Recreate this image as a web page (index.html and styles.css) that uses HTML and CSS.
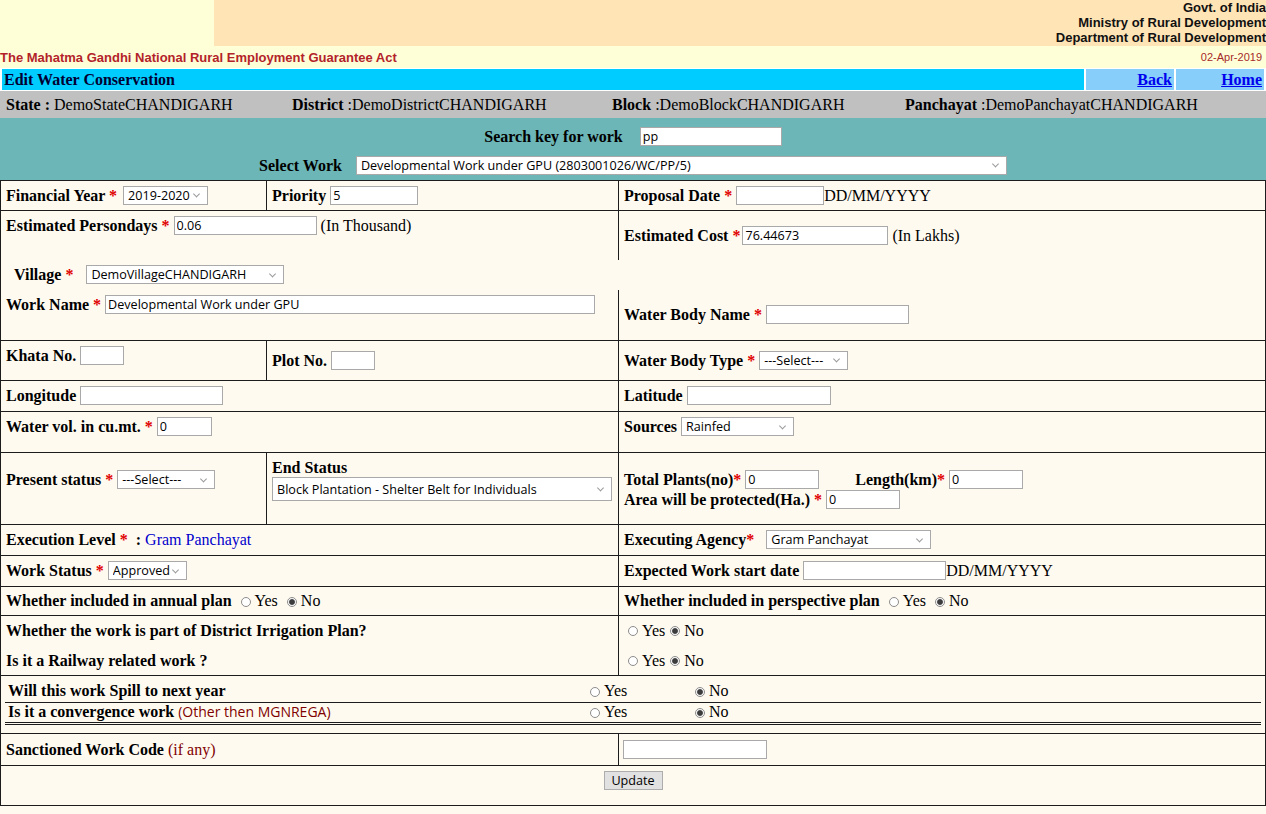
FILE: index.html
```html
<!DOCTYPE html>
<html lang="en">
<head>
<meta charset="utf-8">
<title>Edit Water Conservation</title>
<link rel="stylesheet" href="styles.css">
</head>
<body>
<div class="masthead">
  <div class="masthead-blank"></div>
  <div class="masthead-org">
    <div>Govt. of India</div>
    <div>Ministry of Rural Development</div>
    <div>Department of Rural Development</div>
  </div>
</div>
<div class="actbar">
  <span class="act">The Mahatma Gandhi National Rural Employment Guarantee Act</span>
  <span class="date">02-Apr-2019</span>
</div>
<div class="navbar">
  <div class="pagetitle">Edit Water Conservation</div>
  <div class="navlink"><a href="#">Back</a></div>
  <div class="navlink"><a href="#">Home</a></div>
</div>
<div class="locbar">
  <div><b>State : </b>DemoStateCHANDIGARH</div>
  <div><b>District</b> :DemoDistrictCHANDIGARH</div>
  <div><b>Block</b> :DemoBlockCHANDIGARH</div>
  <div><b>Panchayat</b> :DemoPanchayatCHANDIGARH</div>
</div>
<div class="searchbar">
  <div class="srow"><b class="slabel s1">Search key for work</b><input class="f w142" value="pp"></div>
  <div class="srow"><b class="slabel s2">Select Work</b><span class="dd"><select class="f w651"><option>Developmental Work under GPU (2803001026/WC/PP/5)</option></select></span></div>
</div>

<form class="wc-form">
  <div class="row h30">
    <div class="cell la mid"><div><b>Financial Year <span class="req">*</span></b> <span class="dd nudge"><select class="f w85"><option>2019-2020</option></select></span></div></div>
    <div class="cell lb mid"><div><b>Priority</b> <input class="f w88" value="5"></div></div>
    <div class="cell rt mid"><div><b>Proposal Date <span class="req">*</span></b> <input class="f w88">DD/MM/YYYY</div></div>
  </div>
  <div class="row h49 open">
    <div class="cell lf top"><b>Estimated Persondays <span class="req">*</span></b> <input class="f w143" value="0.06"> (In Thousand)</div>
    <div class="cell rt mid"><div><b>Estimated Cost <span class="req">*</span></b><input class="f w146 tight" value="76.44673"> (In Lakhs)</div></div>
  </div>
  <div class="row h30 open">
    <div class="cell village mid"><div><b>Village <span class="req">*</span></b> <span class="dd wide-gap"><select class="f w198"><option>DemoVillageCHANDIGARH</option></select></span></div></div>
  </div>
  <div class="row h51">
    <div class="cell lf top"><b>Work Name <span class="req">*</span></b> <input class="f w490" value="Developmental Work under GPU"></div>
    <div class="cell rt mid"><div><b>Water Body Name <span class="req">*</span></b> <input class="f w143"></div></div>
  </div>
  <div class="row h40">
    <div class="cell la top"><b>Khata No.</b> <input class="f w44"></div>
    <div class="cell lb mid"><div><b>Plot No.</b> <input class="f w44"></div></div>
    <div class="cell rt mid"><div><b>Water Body Type <span class="req">*</span></b> <span class="dd"><select class="f w89"><option>---Select---</option></select></span></div></div>
  </div>
  <div class="row h31">
    <div class="cell lf mid"><div><b>Longitude</b> <input class="f w143"></div></div>
    <div class="cell rt mid"><div><b>Latitude</b> <input class="f w144"></div></div>
  </div>
  <div class="row h41">
    <div class="cell lf top"><b>Water vol. in cu.mt. <span class="req">*</span></b> <input class="f w55" value="0"></div>
    <div class="cell rt top"><b>Sources</b> <span class="dd"><select class="f w113"><option>Rainfed</option></select></span></div>
  </div>
  <div class="row h72">
    <div class="cell la top deep"><b>Present status <span class="req">*</span></b> <span class="dd"><select class="f w98"><option>---Select---</option></select></span></div>
    <div class="cell lb top">
      <div class="endlabel"><b>End Status</b></div>
      <div><span class="dd"><select class="f w340 tall"><option>Block Plantation - Shelter Belt for Individuals</option></select></span></div>
    </div>
    <div class="cell rt top deep">
      <div><b>Total Plants(no)<span class="req">*</span></b> <input class="f w74" value="0"><b class="length">Length(km)<span class="req">*</span></b> <input class="f w74" value="0"></div>
      <div><b>Area will be protected(Ha.) <span class="req">*</span></b> <input class="f w74" value="0"></div>
    </div>
  </div>
  <div class="row h31">
    <div class="cell lf mid"><div><b>Execution Level <span class="req">*</span>&nbsp;&nbsp;:</b> <span class="level">Gram Panchayat</span></div></div>
    <div class="cell rt mid"><div><b>Executing Agency<span class="req">*</span></b>&nbsp;&nbsp; <span class="dd"><select class="f w165"><option>Gram Panchayat</option></select></span></div></div>
  </div>
  <div class="row h31">
    <div class="cell lf mid"><div><b>Work Status <span class="req">*</span></b> <span class="dd"><select class="f w79"><option>Approved</option></select></span></div></div>
    <div class="cell rt mid"><div><b>Expected Work start date</b> <input class="f w143">DD/MM/YYYY</div></div>
  </div>
  <div class="row h29">
    <div class="cell lf mid"><div><b>Whether included in annual plan</b> <input type="radio" name="annual"><span>Yes</span> <input type="radio" name="annual" checked><span>No</span></div></div>
    <div class="cell rt mid"><div><b>Whether included in perspective plan</b> <input type="radio" name="persp"><span>Yes</span> <input type="radio" name="persp" checked><span>No</span></div></div>
  </div>
  <div class="row h60">
    <div class="cell lf pair">
      <div class="pline"><b>Whether the work is part of District Irrigation Plan?</b></div>
      <div class="pline"><b>Is it a Railway related work ?</b></div>
    </div>
    <div class="cell rt pair radios">
      <div class="pline"><input type="radio" name="dip">Yes<input type="radio" name="dip" checked>No</div>
      <div class="pline"><input type="radio" name="rail">Yes<input type="radio" name="rail" checked>No</div>
    </div>
  </div>
  <div class="row h58 spillrow">
    <div class="spill">
      <div class="sp-row sp-first">
        <div class="sp-q"><b>Will this work Spill to next year</b></div>
        <div><input type="radio" name="spill">Yes</div>
        <div><input type="radio" name="spill" checked>No</div>
      </div>
      <div class="sp-row sp-last">
        <div class="sp-q"><b>Is it a convergence work</b> <span class="note">(Other then MGNREGA)</span></div>
        <div><input type="radio" name="conv">Yes</div>
        <div><input type="radio" name="conv" checked>No</div>
      </div>
    </div>
  </div>
  <div class="row h32">
    <div class="cell lf mid"><div><b>Sanctioned Work Code</b> <span class="ifany">(if any)</span></div></div>
    <div class="cell rt mid code"><div><input class="f w144"></div></div>
  </div>
  <div class="row h39 actions">
    <button type="button" class="update">Update</button>
  </div>
</form>
</body>
</html>
```

FILE: styles.css
```css
* {
  box-sizing: border-box;
}

html,
body {
  margin: 0;
  padding: 0;
}

body {
  background: #fffaf0;
  color: #000;
  font-family: "Liberation Serif", "Times New Roman", serif;
  font-size: 16px;
}

/* ---------- masthead ---------- */
.masthead {
  display: flex;
  height: 46px;
}

.masthead-blank {
  width: 214px;
  background: #ffffd7;
}

.masthead-org {
  flex: 1;
  background: #ffe4b5;
  text-align: right;
  font: bold 13px/15px "Liberation Sans", Arial, sans-serif;
  color: #111;
}

.actbar {
  display: flex;
  justify-content: space-between;
  align-items: center;
  height: 22px;
  background: #ffffd7;
  padding-right: 4px;
  font-family: "Liberation Sans", Arial, sans-serif;
}

.act {
  font-weight: bold;
  font-size: 13px;
  color: #b3232a;
}

.date {
  font-size: 11px;
  color: #a52a2a;
}

/* ---------- title / navigation ---------- */
.navbar {
  display: flex;
  gap: 2px;
  height: 23px;
  padding: 1px 2px 1px 2px;
  background: #ffffff;
}

.pagetitle {
  flex: 1;
  background: #00ccff;
  color: #000033;
  font-weight: bold;
  line-height: 22px;
  padding-left: 2px;
}

.navlink {
  width: 88px;
  background: #87cefa;
  text-align: right;
  line-height: 22px;
  padding-right: 2px;
}

.navlink a {
  color: #0000ee;
  font-weight: bold;
}

/* ---------- location strip ---------- */
.locbar {
  display: grid;
  grid-template-columns: 286px 320px 293px 1fr;
  align-items: center;
  height: 27px;
  padding: 1px 0 0 6px;
  background: #c0c0c0;
}

/* ---------- work search ---------- */
.searchbar {
  height: 62px;
  padding-top: 4px;
  background: #6cb6b7;
}

.srow {
  display: flex;
  justify-content: center;
  align-items: center;
  height: 28px;
  margin-bottom: 1px;
}

.slabel {
  padding-top: 1px;
}

.slabel.s1 {
  margin-right: 17px;
}

.slabel.s2 {
  margin-right: 14px;
}

/* ---------- form controls ---------- */
.f {
  font-family: "Open Sans", "Noto Sans", sans-serif;
  font-size: 12.6px;
  color: #000;
  height: 19px;
  border: 1px solid #a9a9a9;
  background: #fff;
  vertical-align: top;
  margin: 0;
  border-radius: 0;
}

input.f {
  padding: 0 2px;
}

input.f.tight {
  margin-left: 2px;
}

select.f {
  -webkit-appearance: none;
  appearance: none;
  padding: 0 16px 0 4px;
  display: block;
}

select.f.tall {
  height: 24px;
}

.dd {
  position: relative;
  display: inline-block;
  vertical-align: top;
}

.dd.nudge {
  margin-left: 2px;
}

.dd.wide-gap {
  margin-left: 9px;
}

.dd::after {
  content: "";
  position: absolute;
  right: 9px;
  top: 50%;
  width: 4px;
  height: 4px;
  border-right: 1px solid #9a9a9a;
  border-bottom: 1px solid #9a9a9a;
  transform: translateY(-70%) rotate(45deg);
  pointer-events: none;
}

.w44 { width: 44px; }
.w55 { width: 55px; }
.w74 { width: 74px; }
.w79 { width: 79px; }
.w85 { width: 85px; }
.w88 { width: 88px; }
.w89 { width: 89px; }
.w98 { width: 98px; }
.w113 { width: 113px; }
.w142 { width: 142px; }
.w143 { width: 143px; }
.w144 { width: 144px; }
.w146 { width: 146px; }
.w165 { width: 165px; }
.w198 { width: 198px; }
.w340 { width: 340px; }
.w490 { width: 490px; }
.w651 { width: 651px; }

input[type="radio"] {
  -webkit-appearance: none;
  appearance: none;
  width: 10px;
  height: 10px;
  margin: 0 4px 0 5px;
  border: 1px solid #8c8c8c;
  border-radius: 50%;
  background: #fff;
  vertical-align: -1px;
}

input[type="radio"]:checked {
  background: radial-gradient(circle, #3c3c3c 0 2.4px, #9a9a9a 2.9px, #fff 3.6px);
}

.req {
  color: #e00000;
}

/* ---------- main form grid ---------- */
.wc-form {
  margin: 0;
  border: 1px solid #1c1c1c;
  background: #fffaf0;
}

.row {
  display: flex;
  border-bottom: 1px solid #1c1c1c;
  line-height: 20px;
}

.row.open {
  border-bottom: none;
}

.row:last-child {
  border-bottom: none;
}

.h29 { height: 29px; }
.h30 { height: 30px; }
.h31 { height: 31px; }
.h32 { height: 32px; }
.h39 { height: 39px; }
.h40 { height: 40px; }
.h41 { height: 41px; }
.h49 { height: 49px; }
.h51 { height: 51px; }
.h58 { height: 58px; }
.h60 { height: 60px; }
.h72 { height: 72px; }

.cell {
  padding-left: 5px;
}

.la {
  width: 266px;
  border-right: 1px solid #1c1c1c;
}

.lb {
  width: 352px;
  border-right: 1px solid #1c1c1c;
}

.lf {
  width: 618px;
  border-right: 1px solid #1c1c1c;
}

.rt {
  flex: 1;
}

.village {
  width: 618px;
  padding-left: 13px;
}

.mid {
  display: flex;
  align-items: center;
}

.top {
  padding-top: 5px;
}

.top.deep {
  padding-top: 17px;
}

.endlabel {
  line-height: 19px;
}

.length {
  margin-left: 36px;
}

.level {
  color: #0000cc;
}

.pair .pline {
  height: 30px;
  display: flex;
  align-items: center;
}

.pair .pline:last-child {
  height: 29px;
}

.radios {
  padding-left: 4px;
}

/* spill / convergence block */
.spillrow {
  display: block;
  padding: 0 4px;
}

.spill {
  line-height: 18px;
}

.sp-row {
  display: grid;
  grid-template-columns: 580px 105px 1fr;
  align-items: center;
  border-bottom: 1px solid #1c1c1c;
}

.sp-row.sp-first {
  height: 27px;
  padding-top: 3px;
}

.sp-row.sp-last {
  height: 22px;
  padding-bottom: 2px;
  border-bottom: 3px double #1c1c1c;
}

.sp-q {
  padding-left: 3px;
}

.note {
  font-family: "Open Sans", "Noto Sans", sans-serif;
  font-size: 14px;
  color: #800000;
}

.ifany {
  color: #800000;
}

.code {
  padding-left: 4px;
}

.actions {
  display: flex;
  justify-content: center;
  align-items: flex-start;
  padding-top: 5px;
}

.update {
  width: 59px;
  height: 19px;
  padding: 0;
  margin: 0;
  font-family: "Open Sans", "Noto Sans", sans-serif;
  font-size: 12.6px;
  color: #000;
  background: #e1e1e1;
  border: 1px solid #adadad;
  border-radius: 0;
}
```
